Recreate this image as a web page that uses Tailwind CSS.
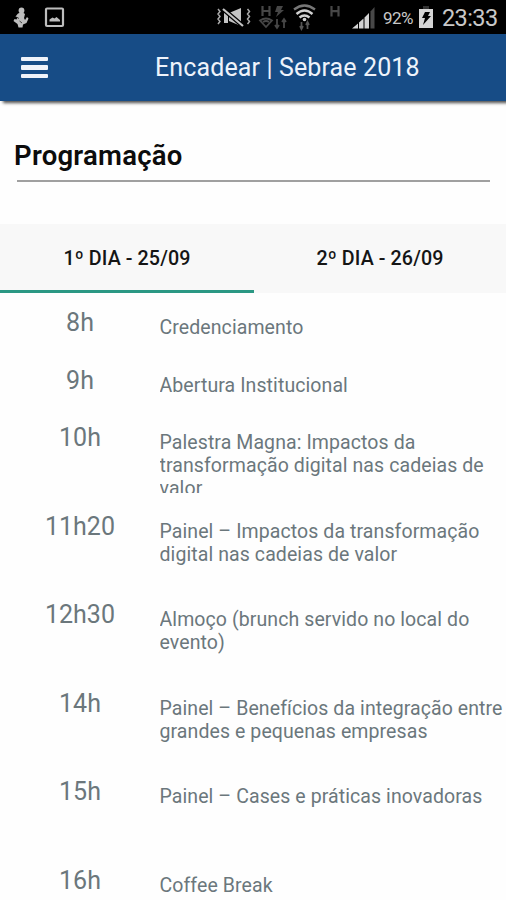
<!DOCTYPE html>
<html lang="pt-BR">
<head>
  <meta charset="UTF-8" />
  <title>Encadear | Sebrae 2018</title>
  <script src="https://cdn.jsdelivr.net/npm/@tailwindcss/browser@4"></script>
</head>
<body class="bg-[#fefefe] font-['Roboto',sans-serif] h-[900px] overflow-hidden">
  <!-- Status bar -->
  <div class="h-[34px] bg-black flex items-center justify-between">
    <svg class="w-[70px] h-[34px]" viewBox="0 0 70 34" fill="none">
      <g fill="#bdbdbd">
        <circle cx="21.500" cy="10.500" r="2.900" />
        <path d="M18 13.500l4-1.500 3 2-1 4 1 2 2-3 1.500 1.500-2 4.500-3.500 1.500-0.500 3h-4l-1-3.500-4-3 1-2 2 0.500 1-2-2-1z" />
      </g>
      <path d="M16.500 17l2.500 1.500M19.500 21l2.500 2" stroke="#222" stroke-width="0.800" />
      <rect x="46" y="8.500" width="17" height="17.500" rx="1" stroke="#bdbdbd" stroke-width="2.200" />
      <path d="M49.500 21.500v-2l3-2 2 1 2-1.500 3.500 3v1.500z" fill="#bdbdbd" />
    </svg>
    <div class="flex items-center">
      <svg class="w-[165px] h-[34px]" viewBox="215 0 165 34" fill="none">
        <!-- Vibrate / muted -->
        <path d="M218 9l2 2.500-2 2.500 2 2.500-2 2.500 2 2.500-2 2.500M247.500 9l2 2.500-2 2.500 2 2.500-2 2.500 2 2.500-2 2.500" stroke="#aaa" stroke-width="1.500" />
        <path d="M224 12h4v11h-4zM229 13l12-5v18l-12-5z" fill="#c4c4c4" />
        <path d="M223 9l20 17" stroke="#000" stroke-width="4.500" />
        <path d="M223 9l20 17" stroke="#c4c4c4" stroke-width="2.200" />
        <!-- Data indicators -->
        <path d="M262.500 6v10M269.500 6v10M262.500 11h7" stroke="#474747" stroke-width="2.200" />
        <path d="M277 6h6l-2 4h3l-8 7 2-5h-3z" fill="#474747" />
        <path d="M260 20.500q6-4 12 0l-6 6.500zM263 22q3-2 6 0" stroke="#474747" stroke-width="1.800" />
        <path d="M277 19v8m-2-2l2 3 2-3M284 28v-8m-2 2l2-3 2 3" stroke="#474747" stroke-width="1.800" />
        <!-- Wifi -->
        <path d="M294 9.500q10.500-8 21 0" stroke="#777" stroke-width="2.300" />
        <path d="M296.500 14q8-7 16 0M299.500 17.500q5-4 10 0" stroke="#d0d0d0" stroke-width="2.400" />
        <circle cx="304.500" cy="19.500" r="1.800" fill="#d0d0d0" />
        <path d="M301.500 22v6m-1.500-2l1.500 3 1.500-3M307.500 29v-6m-1.500 2l1.500-3 1.500 3" stroke="#555" stroke-width="1.700" />
        <path d="M331.500 6v10.500M338.500 6v10.500M331.500 11.200h7" stroke="#474747" stroke-width="2.200" />
        <!-- Signal -->
        <path d="M352 28.500l6-5v5zM359 22.500l4.500-4v10h-4.500zM364.500 17.500l4.500-4.500v15.500h-4.500z" fill="#d4d4d4" />
        <path d="M370.500 11.500l4-4.500v21.500h-4z" fill="#484848" />
      </svg>
      <span class="w-[36px] pl-[3px] text-[17px] leading-[34px] text-[#c8c8c8] tracking-[-0.500px] whitespace-nowrap pt-[2px]">92%</span>
      <svg class="w-[24px] h-[34px]" viewBox="416 0 24 34">
        <path d="M423 6h6v3h-6z" fill="#333" />
        <rect x="419" y="9" width="14" height="19" fill="#d4d4d4" />
        <path d="M425 12h5l-2 4h3l-8 9 2-7h-3z" fill="#000" />
      </svg>
      <span class="w-[66px] pl-[2px] text-[23.500px] leading-[34px] text-[#c8c8c8] tracking-[-0.600px] whitespace-nowrap pt-[2px]">23:33</span>
    </div>
  </div>

  <!-- App bar -->
  <header class="relative h-[67px] bg-[#174c86] flex items-center shadow-[3px_2px_3px_rgba(0,0,0,0.7)]">
    <div class="ml-[21px] w-[27px] flex flex-col gap-[4px]">
      <span class="h-[4.300px] bg-[#f0f3fa] rounded-[1px]"></span>
      <span class="h-[4.300px] bg-[#f0f3fa] rounded-[1px]"></span>
      <span class="h-[4.300px] bg-[#f0f3fa] rounded-[1px]"></span>
    </div>
    <h1 class="ml-[107px] text-[25px] tracking-[0.120px] text-[#eef3fb] whitespace-nowrap">Encadear | Sebrae 2018</h1>
  </header>

  <main>
    <div class="h-[123px] pt-[38px] pl-[14px] pr-4">
      <h2 class="text-[27.500px] leading-[34px] tracking-[0.250px] font-semibold text-[#0c0c0c]">Programação</h2>
      <div class="ml-[3px] mt-[7px] h-[2px] bg-[#a0a0a0]"></div>
    </div>

    <!-- Tabs -->
    <div class="h-[69px] flex bg-[#f8f8f8] text-[19.700px] tracking-[0.100px] font-medium text-[#151515] text-center leading-[69px]">
      <div class="w-[254px] h-[69px] border-b-[3px] border-[#2b9884]">1º DIA - 25/09</div>
      <div class="flex-1">2º DIA - 26/09</div>
    </div>

    <!-- Schedule -->
    <div id="schedule" class="text-[#6b777c]"></div>
  </main>

  <script>
    const events = [
      { time: "8h", title: "Credenciamento", height: 57.7 },
      { time: "9h", title: "Abertura Institucional", height: 57.7 },
      { time: "10h", title: "Palestra Magna: Impactos da<br>transformação digital nas cadeias de<br>valor", height: 88.5 },
      { time: "11h20", title: "Painel – Impactos da transformação<br>digital nas cadeias de valor", height: 88.5 },
      { time: "12h30", title: "Almoço (brunch servido no local do<br>evento)", height: 88.5 },
      { time: "14h", title: "Painel – Benefícios da integração entre<br>grandes e pequenas empresas", height: 88.5 },
      { time: "15h", title: "Painel – Cases e práticas inovadoras", height: 88.5 },
      { time: "16h", title: "Coffee Break", height: 88.5 }
    ];

    document.getElementById("schedule").innerHTML = events.map(({ time, title, height }) => `
      <div class="flex pt-[15px] pb-[4px]" style="height: ${height}px">
        <div class="w-[160px] text-center text-[25px] leading-[30px]">${time}</div>
        <div class="mt-[8px] -ml-[0.500px] flex-1 overflow-hidden whitespace-nowrap text-[19.500px] leading-[23px] tracking-[0.090px]">${title}</div>
      </div>
    `).join("");
  </script>
</body>
</html>
